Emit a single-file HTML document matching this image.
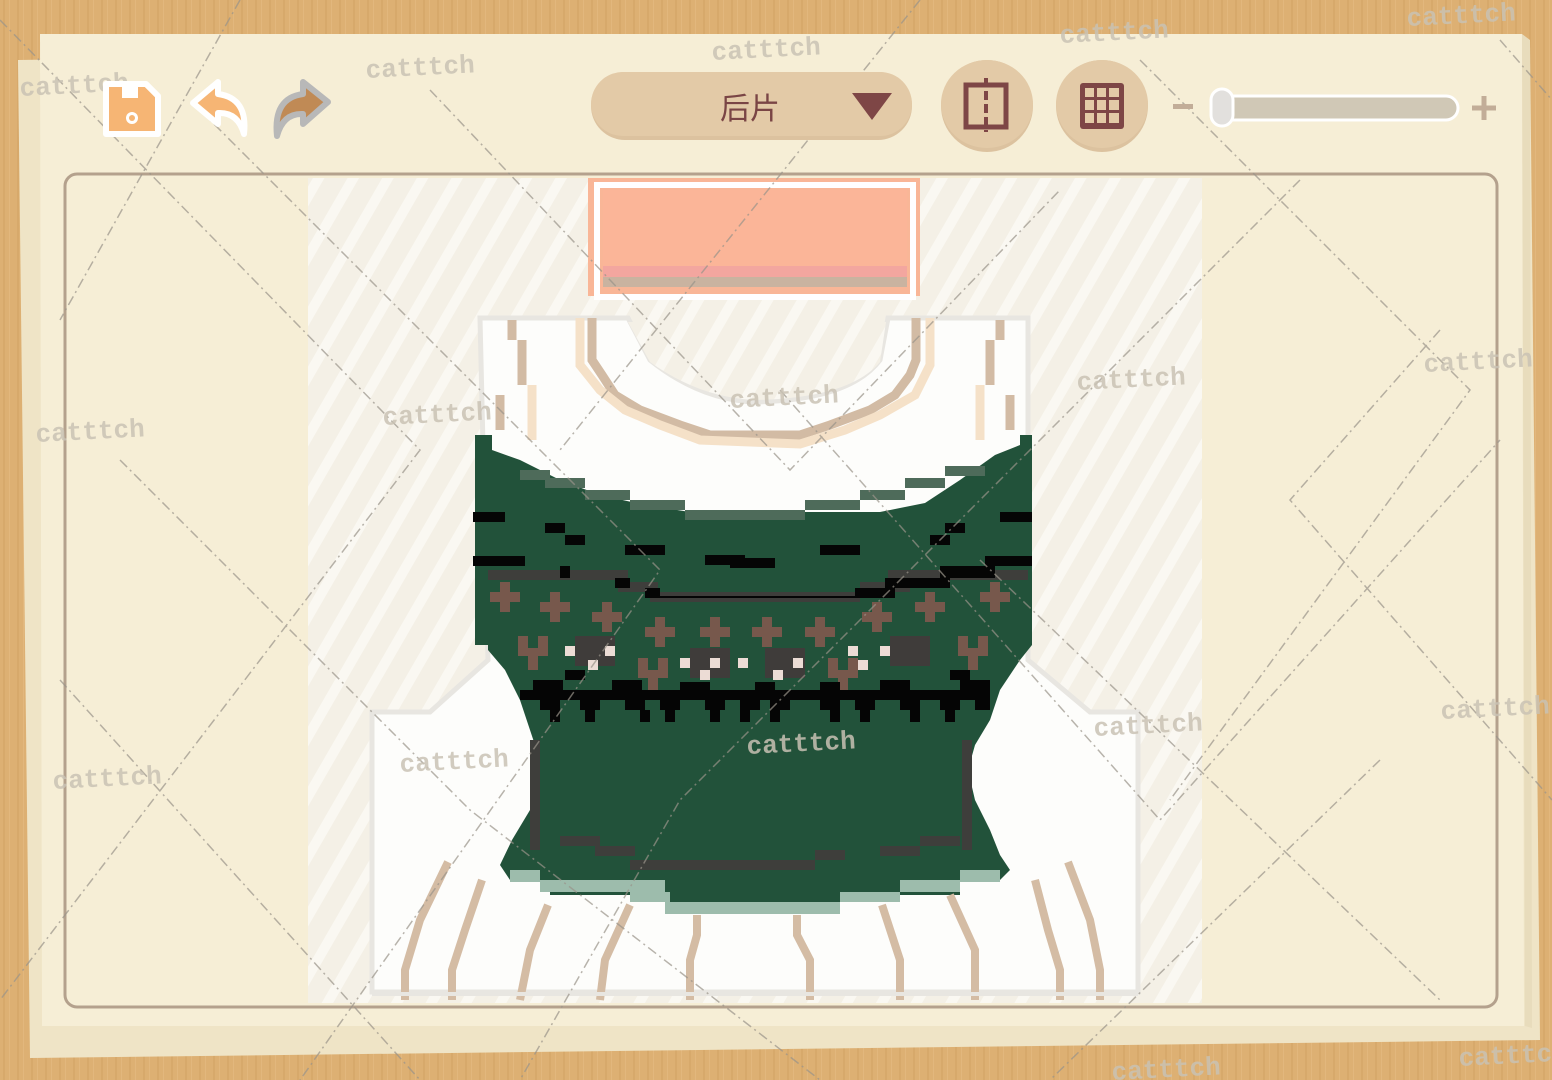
<!DOCTYPE html>
<html><head><meta charset="utf-8">
<style>
html,body{margin:0;padding:0;width:1552px;height:1080px;overflow:hidden;background:#dcae72;}
svg{display:block}
.wm{font-family:"Liberation Mono",monospace;font-weight:bold;font-size:26px;fill:#c9c2b4;opacity:.85}
</style></head><body>
<svg width="1552" height="1080" viewBox="0 0 1552 1080" xmlns="http://www.w3.org/2000/svg">
<defs>
<pattern id="wood" width="14" height="40" patternUnits="userSpaceOnUse">
<rect width="14" height="40" fill="#ddb073"/>
<rect x="3" width="2" height="40" fill="#d4a566" opacity=".6"/>
<rect x="9" width="1" height="40" fill="#e6bd84" opacity=".6"/>
</pattern>
<pattern id="stripe" width="30" height="30" patternUnits="userSpaceOnUse" patternTransform="rotate(30)">
<rect width="30" height="30" fill="#f4f0e6"/>
<rect width="10" height="30" fill="#faf8f2"/>
</pattern>
</defs>
<rect width="1552" height="1080" fill="url(#wood)"/>
<polygon points="18,60 1530,40 1540,1040 30,1058" fill="#efe4c6"/>
<polygon points="40,34 1522,34 1524,1026 42,1026" fill="#f6eed6"/>
<polygon points="1522,34 1525,1026 1532,1028 1530,40" fill="#e8dcbc"/>
<rect x="65" y="174" width="1432" height="833" rx="12" fill="#f6eed6" stroke="#b4a18d" stroke-width="3"/>
<rect x="308" y="178" width="894" height="825" fill="url(#stripe)"/>

<rect x="588" y="178" width="332" height="118" fill="#f9b697"/>
<rect x="597" y="185" width="316" height="112" fill="none" stroke="#fff" stroke-width="6"/>
<rect x="603" y="190" width="304" height="77" fill="#fbb598"/>
<rect x="603" y="266" width="304" height="11" fill="#f3a69f"/>
<rect x="603" y="277" width="304" height="10" fill="#c9b3a0"/>

<path d="M480,318 H628 L650,360 Q700,400 755,402 Q850,400 880,360 L888,318 H1028 V660 L1090,712 H1138 V992 H372 V712 H430 L488,660 Z" fill="#fdfdfb" stroke="#e8e6e1" stroke-width="5"/>
<path d="M628,322 L650,362 Q700,398 756,400 Q850,398 880,362 L886,322 Z" fill="url(#stripe)"/>

<g fill="none" stroke="#d2bba4" stroke-width="9">
<path d="M592,318 V360 L602,375 L615,395 L640,410 L680,425 L710,435 L800,435 L830,425 L870,410 L895,395 L910,375 L916,360 V318"/>
<path d="M512,320 V340 M522,340 V385 M500,395 V430" />
<path d="M1000,320 V340 M990,340 V385 M1010,395 V430"/>
</g>
<g fill="none" stroke="#f5e1c8" stroke-width="9">
<path d="M580,318 V365 L600,390 L625,410 L660,425 L700,440 L800,444 L845,430 L880,415 L915,395 L930,365 V318"/>
<path d="M532,385 V440 M980,385 V440"/>
</g>

<path d="M475,435 H492 V450 L520,460 L560,480 L600,495 L645,505 L690,512 H880 L925,503 L960,480 L995,455 L1020,445 V435 H1032 V645 L1020,660 L1000,690 L990,720 L975,745 L968,770 L975,800 L990,830 L1000,855 L1010,870 L1000,880 H960 V895 H840 V912 H665 V895 H550 V880 H510 L500,865 L512,840 L530,810 L535,780 L540,760 L530,730 L520,700 L505,670 L488,650 V645 H475 Z" fill="#22523a"/>
<g fill="#9dbcac">
<rect x="510" y="870" width="30" height="12"/><rect x="540" y="880" width="125" height="12"/>
<rect x="630" y="892" width="40" height="10"/><rect x="665" y="902" width="175" height="12"/>
<rect x="840" y="892" width="60" height="10"/><rect x="960" y="870" width="40" height="12"/><rect x="900" y="880" width="60" height="12"/>
</g>
<g fill="#3e3e3b">
<rect x="560" y="836" width="40" height="10"/><rect x="595" y="846" width="40" height="10"/><rect x="630" y="860" width="115" height="10"/>
<rect x="745" y="860" width="70" height="10"/><rect x="815" y="850" width="30" height="10"/><rect x="880" y="846" width="40" height="10"/><rect x="920" y="836" width="40" height="10"/>
<rect x="530" y="740" width="10" height="110"/><rect x="962" y="740" width="10" height="110"/>
<rect x="488" y="570" width="140" height="10"/><rect x="618" y="582" width="40" height="10"/><rect x="650" y="592" width="210" height="10"/><rect x="860" y="582" width="50" height="10"/><rect x="888" y="570" width="140" height="10"/>
</g>
<g fill="#4e6b5a">
<rect x="520" y="470" width="30" height="10"/><rect x="545" y="478" width="40" height="10"/><rect x="585" y="490" width="45" height="10"/><rect x="630" y="500" width="55" height="10"/><rect x="685" y="510" width="120" height="10"/>
<rect x="805" y="500" width="55" height="10"/><rect x="860" y="490" width="45" height="10"/><rect x="905" y="478" width="40" height="10"/><rect x="945" y="466" width="40" height="10"/>
</g>
<g fill="#050505">
<rect x="473" y="512" width="32" height="10"/><rect x="545" y="523" width="20" height="10"/><rect x="565" y="535" width="20" height="10"/>
<rect x="625" y="545" width="40" height="10"/><rect x="705" y="555" width="40" height="10"/>
<rect x="820" y="545" width="40" height="10"/><rect x="945" y="523" width="20" height="10"/><rect x="930" y="535" width="20" height="10"/><rect x="1000" y="512" width="32" height="10"/>
<rect x="730" y="558" width="45" height="10"/>
<path d="M473,556 H525 V566 H570 V578 H630 V588 H660 V596 H855 V588 H885 V578 H940 V566 H985 V556 H1032 V566 H995 V578 H950 V588 H895 V598 H645 V588 H615 V578 H560 V566 H473 Z"/>
</g>
<g fill="#77584c">
<path id="cr" d="M500,582 h10 v10 h10 v10 h-10 v10 h-10 v-10 h-10 v-10 h10 z"/>
<use href="#cr" x="50" y="10"/><use href="#cr" x="102" y="20"/><use href="#cr" x="155" y="35"/><use href="#cr" x="210" y="35"/><use href="#cr" x="262" y="35"/><use href="#cr" x="315" y="35"/><use href="#cr" x="372" y="20"/><use href="#cr" x="425" y="10"/><use href="#cr" x="490" y="0"/>
<path id="y1" d="M518,636 h10 v12 h10 v-12 h10 v20 h-10 v14 h-10 v-14 h-10 z"/>
<use href="#y1" x="120" y="22"/><use href="#y1" x="310" y="22"/><use href="#y1" x="440" y="0"/>
</g>
<g fill="#3f3c3a"><rect x="575" y="636" width="40" height="30"/><rect x="690" y="648" width="40" height="30"/><rect x="765" y="648" width="40" height="30"/><rect x="890" y="636" width="40" height="30"/></g>
<g fill="#ecdcd5"><rect x="565" y="646" width="10" height="10"/><rect x="588" y="660" width="10" height="10"/><rect x="605" y="646" width="10" height="10"/>
<rect x="680" y="658" width="10" height="10"/><rect x="700" y="670" width="10" height="10"/><rect x="710" y="658" width="10" height="10"/>
<rect x="738" y="658" width="10" height="10"/><rect x="773" y="670" width="10" height="10"/><rect x="793" y="658" width="10" height="10"/>
<rect x="848" y="646" width="10" height="10"/><rect x="858" y="660" width="10" height="10"/><rect x="880" y="646" width="10" height="10"/></g>
<g fill="#050505">
<rect x="533" y="680" width="30" height="10"/><rect x="565" y="670" width="20" height="10"/><rect x="612" y="680" width="30" height="10"/><rect x="680" y="682" width="30" height="10"/><rect x="755" y="682" width="20" height="10"/><rect x="820" y="682" width="20" height="10"/><rect x="880" y="680" width="30" height="10"/><rect x="950" y="670" width="20" height="10"/><rect x="960" y="680" width="30" height="10"/>
<rect x="520" y="690" width="470" height="10"/>
<rect x="540" y="700" width="20" height="10"/><rect x="580" y="700" width="20" height="10"/><rect x="625" y="700" width="20" height="10"/><rect x="660" y="700" width="20" height="10"/><rect x="705" y="700" width="20" height="10"/><rect x="740" y="700" width="20" height="10"/><rect x="770" y="700" width="20" height="10"/><rect x="820" y="700" width="20" height="10"/><rect x="855" y="700" width="20" height="10"/><rect x="900" y="700" width="20" height="10"/><rect x="940" y="700" width="20" height="10"/><rect x="975" y="700" width="15" height="10"/>
<rect x="550" y="710" width="10" height="12"/><rect x="585" y="710" width="10" height="12"/><rect x="640" y="710" width="10" height="12"/><rect x="665" y="710" width="10" height="12"/><rect x="710" y="710" width="10" height="12"/><rect x="740" y="710" width="10" height="12"/><rect x="770" y="710" width="10" height="12"/><rect x="830" y="710" width="10" height="12"/><rect x="860" y="710" width="10" height="12"/><rect x="910" y="710" width="10" height="12"/><rect x="945" y="710" width="10" height="12"/>
</g>

<g fill="none" stroke="#d4bca4" stroke-width="8">
<path d="M448,862 L420,920 L405,970 V1000"/><path d="M482,880 L465,930 L452,970 V1000"/>
<path d="M548,905 L530,950 L520,1000"/><path d="M630,905 L605,960 L600,1000"/>
<path d="M697,915 V935 L690,960 V1000"/><path d="M797,915 V935 L810,960 V1000"/>
<path d="M882,905 L900,960 V1000"/><path d="M950,895 L975,950 V1000"/>
<path d="M1035,880 L1048,930 L1060,970 V1000"/><path d="M1068,862 L1090,920 L1100,970 V1000"/>
</g>
<rect x="372" y="992" width="766" height="4" fill="#e8e6e1"/>

<g stroke="#9a948a" stroke-width="1.5" stroke-dasharray="10,4,2,4" fill="none" opacity=".7">
<path d="M0,20 L420,450 L260,660 L0,1000"/>
<path d="M240,0 L60,320"/><path d="M430,90 L790,470 L1060,190"/>
<path d="M920,0 L560,450"/><path d="M200,110 L660,570 L300,1080"/>
<path d="M1140,60 L1470,390 L1170,800"/><path d="M1500,40 L1552,100"/>
<path d="M1440,330 L1290,500 L1552,800"/><path d="M780,390 L1160,820 L1500,440"/>
<path d="M120,460 L470,810 L820,1080"/><path d="M1300,180 L680,800 L520,1080"/>
<path d="M60,680 L420,1080"/><path d="M1380,760 L1050,1080"/>
<path d="M980,560 L1440,1000"/>
</g>

<g class="wm">
<text x="20" y="96" transform="rotate(-3 20 96)">catttch</text>
<text x="366" y="78" transform="rotate(-3 366 78)">catttch</text>
<text x="712" y="60" transform="rotate(-3 712 60)">catttch</text>
<text x="1060" y="43" transform="rotate(-3 1060 43)">catttch</text>
<text x="1407" y="26" transform="rotate(-3 1407 26)">catttch</text>
<text x="36" y="442" transform="rotate(-3 36 442)">catttch</text>
<text x="383" y="425" transform="rotate(-3 383 425)">catttch</text>
<text x="730" y="408" transform="rotate(-3 730 408)">catttch</text>
<text x="1077" y="390" transform="rotate(-3 1077 390)">catttch</text>
<text x="1424" y="372" transform="rotate(-3 1424 372)">catttch</text>
<text x="53" y="789" transform="rotate(-3 53 789)">catttch</text>
<text x="400" y="772" transform="rotate(-3 400 772)">catttch</text>
<text x="747" y="754" transform="rotate(-3 747 754)">catttch</text>
<text x="1094" y="736" transform="rotate(-3 1094 736)">catttch</text>
<text x="1441" y="719" transform="rotate(-3 1441 719)">catttch</text>
<text x="1112" y="1080" transform="rotate(-3 1112 1080)">catttch</text>
<text x="1459" y="1066" transform="rotate(-3 1459 1066)">catttch</text>
</g>

<path d="M106,84 H146 L158,96 V134 H106 Z" fill="#f6b574" stroke="#fff" stroke-width="6" stroke-linejoin="round"/>
<rect x="122" y="86" width="16" height="12" fill="#fff"/>
<circle cx="132" cy="118" r="6" fill="#fff"/><circle cx="132" cy="118" r="3" fill="#f6b574"/>
<path d="M193,103 L218,82 V94 Q248,98 244,134 Q238,112 218,113 V124 Z" fill="#f6b574" stroke="#fff" stroke-width="6" stroke-linejoin="round"/>
<path d="M328,102 L303,82 V94 Q273,98 277,136 Q283,113 303,114 V124 Z" fill="#c08a55" stroke="#b8b8b8" stroke-width="6" stroke-linejoin="round"/>
<rect x="591" y="72" width="321" height="68" rx="34" fill="#dcc29f"/>
<rect x="591" y="72" width="321" height="64" rx="32" fill="#e3caa7"/>
<text x="750" y="119" text-anchor="middle" font-family="'Liberation Sans','Noto Sans CJK SC',sans-serif" font-size="30" fill="#7a4545">后片</text>
<path d="M852,93 H892 L872,120 Z" fill="#7e4646"/>
<ellipse cx="987" cy="106" rx="46" ry="46" fill="#dcc29f"/><ellipse cx="987" cy="104" rx="46" ry="44" fill="#e3caa7"/>
<ellipse cx="1102" cy="106" rx="46" ry="46" fill="#dcc29f"/><ellipse cx="1102" cy="104" rx="46" ry="44" fill="#e3caa7"/>
<rect x="966" y="85" width="40" height="42" fill="none" stroke="#7e4646" stroke-width="5"/>
<path d="M986,78 V132" stroke="#7e4646" stroke-width="4" stroke-dasharray="9,4"/>
<rect x="1080" y="83" width="44" height="46" rx="3" fill="#7e4646"/>
<g fill="#e3caa7"><rect x="1085" y="88" width="9" height="9"/><rect x="1097" y="88" width="9" height="9"/><rect x="1109" y="88" width="10" height="9"/>
<rect x="1085" y="100" width="9" height="10"/><rect x="1097" y="100" width="9" height="10"/><rect x="1109" y="100" width="10" height="10"/>
<rect x="1085" y="113" width="9" height="10"/><rect x="1097" y="113" width="9" height="10"/><rect x="1109" y="113" width="10" height="10"/></g>
<rect x="1173" y="104" width="20" height="5" fill="#c2ad98"/>
<rect x="1212" y="96" width="246" height="24" rx="12" fill="#d0c8b6" stroke="#fff" stroke-width="3"/>
<rect x="1211" y="89" width="22" height="37" rx="11" fill="#e2e0dd" stroke="#fff" stroke-width="3"/>
<path d="M1484,96 V120 M1472,108 H1496" stroke="#c2ad98" stroke-width="5"/>
</svg>
</body></html>
